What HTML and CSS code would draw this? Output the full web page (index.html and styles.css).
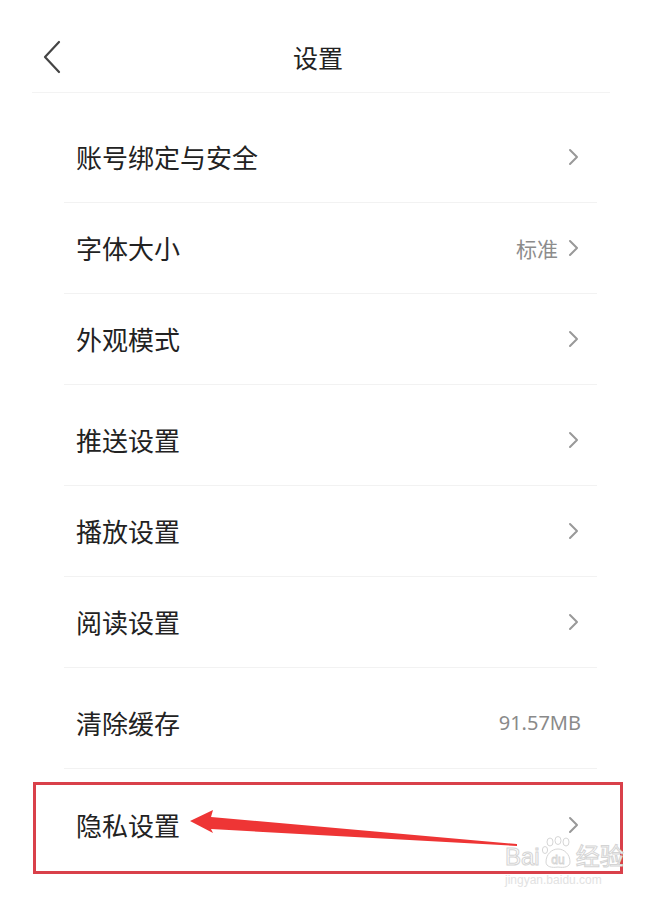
FILE: index.html
```html
<!DOCTYPE html>
<html lang="zh-CN">
<head>
<meta charset="utf-8">
<title>设置</title>
<link rel="stylesheet" href="styles.css">
</head>
<body>
<div class="page">
  <header class="header">
    <svg class="back" width="20" height="34" viewBox="0 0 20 34"><path d="M16 2 L2 17 L16 32" fill="none" stroke="#444" stroke-width="2.2" stroke-linecap="round" stroke-linejoin="round"/></svg>
    <h1 class="title">设置</h1>
    <span></span>
  </header>
  <ul class="list">
    <li class="row"><span class="label">账号绑定与安全</span><span class="right"><svg class="chev" width="12" height="18" viewBox="0 0 12 18"><path d="M2 2 L9 9 L2 16" fill="none" stroke="#999" stroke-width="2" stroke-linecap="round" stroke-linejoin="round"/></svg></span></li>
    <li class="row"><span class="label">字体大小</span><span class="right"><span class="value">标准</span><svg class="chev" width="12" height="18" viewBox="0 0 12 18"><path d="M2 2 L9 9 L2 16" fill="none" stroke="#999" stroke-width="2" stroke-linecap="round" stroke-linejoin="round"/></svg></span></li>
    <li class="row"><span class="label">外观模式</span><span class="right"><svg class="chev" width="12" height="18" viewBox="0 0 12 18"><path d="M2 2 L9 9 L2 16" fill="none" stroke="#999" stroke-width="2" stroke-linecap="round" stroke-linejoin="round"/></svg></span></li>
    <li class="row gap"><span class="label">推送设置</span><span class="right"><svg class="chev" width="12" height="18" viewBox="0 0 12 18"><path d="M2 2 L9 9 L2 16" fill="none" stroke="#999" stroke-width="2" stroke-linecap="round" stroke-linejoin="round"/></svg></span></li>
    <li class="row"><span class="label">播放设置</span><span class="right"><svg class="chev" width="12" height="18" viewBox="0 0 12 18"><path d="M2 2 L9 9 L2 16" fill="none" stroke="#999" stroke-width="2" stroke-linecap="round" stroke-linejoin="round"/></svg></span></li>
    <li class="row"><span class="label">阅读设置</span><span class="right"><svg class="chev" width="12" height="18" viewBox="0 0 12 18"><path d="M2 2 L9 9 L2 16" fill="none" stroke="#999" stroke-width="2" stroke-linecap="round" stroke-linejoin="round"/></svg></span></li>
    <li class="row gap"><span class="label">清除缓存</span><span class="right"><span class="value size">91.57MB</span></span></li>
    <li class="row gap last"><span class="label">隐私设置</span><span class="right"><svg class="chev" width="12" height="18" viewBox="0 0 12 18"><path d="M2 2 L9 9 L2 16" fill="none" stroke="#999" stroke-width="2" stroke-linecap="round" stroke-linejoin="round"/></svg></span>
      <div class="highlight"></div>
    </li>
  </ul>

  <svg class="arrow" width="659" height="900" viewBox="0 0 659 900"><polygon points="190,821 213,810 211,817 517,844 517,846 211,829 213,833" fill="#ee3535"/></svg>

  <div class="watermark">
    <div class="wm-logo">
      <span class="wm-text">Bai</span>
      <span class="paw">
        <svg width="34" height="34" viewBox="0 0 34 34">
          <ellipse cx="9" cy="6" rx="3" ry="4" fill="#fff" stroke="#d6d6d6" stroke-width="1"/>
          <ellipse cx="17" cy="4.5" rx="3" ry="4" fill="#fff" stroke="#d6d6d6" stroke-width="1"/>
          <ellipse cx="25" cy="6" rx="3" ry="4" fill="#fff" stroke="#d6d6d6" stroke-width="1"/>
          <ellipse cx="4" cy="14" rx="2.6" ry="3.5" fill="#fff" stroke="#d6d6d6" stroke-width="1"/>
          <path d="M5 26 C5 18 11 13 17 13 C23 13 29 18 29 26 C29 31 23 32 17 31 C11 32 5 31 5 26 Z" fill="#fff" stroke="#d6d6d6" stroke-width="1"/>
          <text x="17" y="28" text-anchor="middle" class="paw-text">du</text>
        </svg>
      </span>
      <span class="wm-text">经验</span>
    </div>
    <div class="wm-url">jingyan.baidu.com</div>
  </div>
</div>
</body>
</html>
```
FILE: styles.css
```css
* { box-sizing: border-box; }
html, body { margin: 0; padding: 0; background: #fff; }
body {
  font-family: "Noto Sans CJK SC", "Noto Sans", sans-serif;
  color: #222;
  width: 659px;
  height: 900px;
  overflow: hidden;
}
.page { position: relative; width: 659px; height: 900px; }

.header {
  display: grid;
  grid-template-columns: 1fr auto 1fr;
  align-items: center;
  height: 93px;
  padding-top: 22px;
  margin: 0 49px 0 32px;
  border-bottom: 1px solid #f3f3f3;
}
.back { margin-left: 11px; display: block; }
.title {
  margin: 0;
  font-size: 25px;
  font-weight: 400;
  line-height: 30px;
  color: #222;
  transform: translateX(-3px);
}

.list {
  list-style: none;
  margin: 19px 62px 0 64px;
  padding: 0;
}
.row {
  display: flex;
  align-items: center;
  justify-content: space-between;
  height: 91px;
  padding: 0 19px 0 12px;
  border-bottom: 1px solid #f2f2f2;
}
.row.gap { height: 101px; padding-top: 10px; }
.row.last { border-bottom: none; position: relative; }
.label { font-size: 26px; line-height: 34px; color: #222; }
.right { display: flex; align-items: center; gap: 10px; }
.value { font-size: 21px; color: #8c8c8c; line-height: 28px; }
.value.size { font-family: "Noto Sans", "Noto Sans CJK SC", sans-serif; font-size: 20px; margin-right: -3px; color: #8a8a8a; }
.chev { display: block; margin-right: -2px; }

.highlight {
  position: absolute;
  left: -31px;
  top: 13px;
  width: 590px;
  height: 92px;
  border: 3px solid #d9404a;
  pointer-events: none;
}

.arrow { position: absolute; left: 0; top: 0; pointer-events: none; }

.watermark {
  position: absolute;
  left: 505px;
  top: 836px;
  white-space: nowrap;
}
.wm-logo { display: flex; align-items: flex-end; flex-wrap: nowrap; height: 34px; }
.wm-text {
  font-family: "Liberation Sans", "Noto Sans CJK SC", sans-serif;
  font-size: 24px;
  line-height: 26px;
  color: #fff;
  -webkit-text-stroke: 1px #d4d4d4;
  white-space: nowrap;
}
.paw { display: block; margin: 0 1px; flex: none; }
.paw svg { display: block; }
.paw-text {
  font-family: "Liberation Sans", sans-serif;
  font-size: 12px;
  fill: #fff;
  stroke: #d4d4d4;
  stroke-width: 0.8;
}
.wm-url {
  font-family: "Liberation Sans", sans-serif;
  font-size: 12px;
  line-height: 16px;
  color: #e2e2e2;
  margin-top: 2px;
}
```
